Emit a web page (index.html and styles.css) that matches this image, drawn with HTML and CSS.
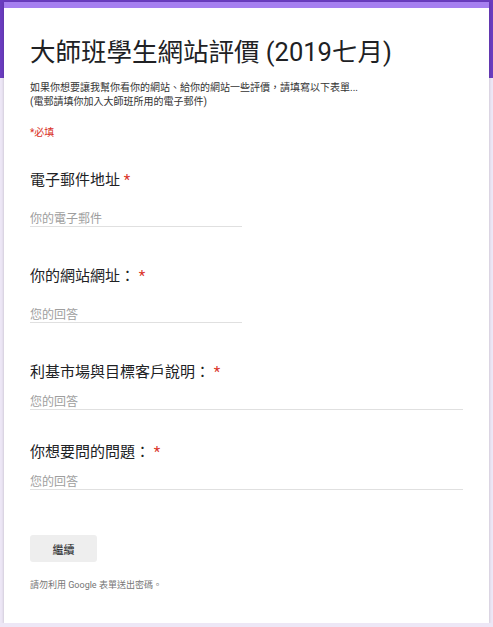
FILE: index.html
```html
<!DOCTYPE html>
<html lang="zh-Hant">
<head>
  <meta charset="UTF-8" />
  <meta name="viewport" content="width=device-width, initial-scale=1.0"/>
  <title>大師班學生網站評價</title>
  <link rel="stylesheet" href="styles.css">
</head>
<body>

  <div class="form">
    <div class="cabecalho">
      <h1>大師班學生網站評價 (2019七月)</h1>
      <p class="descricao">如果你想要讓我幫你看你的網站、給你的網站一些評價，請填寫以下表單...<br>(電郵請填你加入大師班所用的電子郵件)</p>
      <p class="obrigatorio">*必填</p>
    </div>

    <div class="pergunta primeira">
      <div class="titulo">電子郵件地址 <span class="ast">*</span></div>
      <input class="campo curto" type="text" placeholder="你的電子郵件">
    </div>

    <div class="pergunta">
      <div class="titulo">你的網站網址： <span class="ast">*</span></div>
      <input class="campo curto" type="text" placeholder="您的回答">
    </div>

    <div class="pergunta compacta">
      <div class="titulo">利基市場與目標客戶說明： <span class="ast">*</span></div>
      <input class="campo" type="text" placeholder="您的回答">
    </div>

    <div class="pergunta compacta ultima">
      <div class="titulo">你想要問的問題： <span class="ast">*</span></div>
      <input class="campo" type="text" placeholder="您的回答">
    </div>

    <button class="btnContinuar">繼續</button>

    <p class="rodape">請勿利用 Google 表單送出密碼。</p>
  </div>

</body>
</html>
```

FILE: styles.css
```css
html {
  background: #ede7f6;
}

body {
  font-family: Roboto, "Noto Sans CJK TC", sans-serif;
  margin: 0;
  padding: 2px 4px 0;
  background: linear-gradient(#6a3cbf 0, #6a3cbf 78px, #ede7f6 78px);
  color: #202124;
}

.form {
  background: white;
  border-top: 6px solid #a67ff0;
  box-shadow: 0 1px 3px rgba(0,0,0,0.2);
  padding: 28px 26px 29px;
  min-height: 621px;
  box-sizing: border-box;
}

h1 {
  font-size: 25.5px;
  font-weight: 400;
  line-height: 32px;
  margin: 0 0 13px;
}

.descricao {
  font-size: 10px;
  line-height: 14px;
  color: #333;
  margin: 0;
}

.obrigatorio {
  font-size: 10px;
  line-height: 14px;
  color: #d93025;
  margin: 17px 0 0;
}

.pergunta {
  margin-top: 39px;
}

.pergunta.primeira {
  margin-top: 30px;
}

.pergunta.ultima {
  margin-top: 32px;
}

.titulo {
  font-size: 15px;
  line-height: 20px;
  color: #202124;
}

.ast {
  color: #d93025;
}

.campo {
  display: block;
  width: 100%;
  border: none;
  border-bottom: 1px solid #e0e0e0;
  font-family: Roboto, "Noto Sans CJK TC", sans-serif;
  font-size: 12px;
  line-height: 14px;
  height: 20px;
  padding: 5px 0 0;
  margin-top: 8px;
  outline: none;
  box-sizing: border-box;
}

.campo.curto {
  width: 212px;
  margin-top: 17px;
}

.campo::placeholder {
  color: #9e9e9e;
}

.btnContinuar {
  display: block;
  margin-top: 45px;
  width: 67px;
  height: 27px;
  border: none;
  border-radius: 3px;
  background-color: #eeeeee;
  color: #202124;
  font-family: Roboto, "Noto Sans CJK TC", sans-serif;
  font-size: 11px;
  cursor: pointer;
}

.rodape {
  font-size: 9px;
  line-height: 13px;
  color: #757575;
  margin: 17px 0 0;
}
```
